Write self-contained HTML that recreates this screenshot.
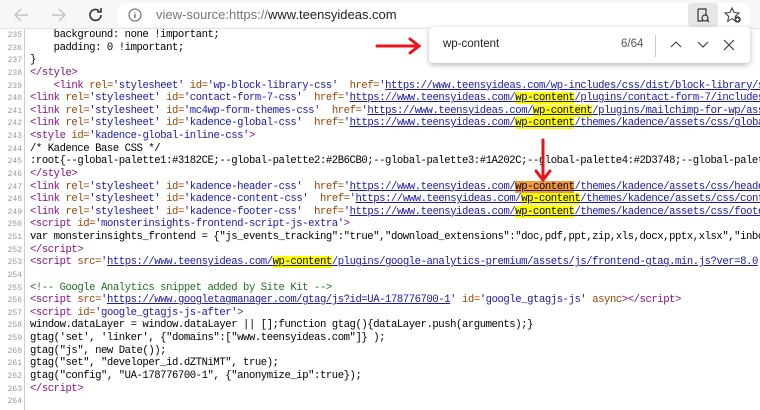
<!DOCTYPE html>
<html><head><meta charset="utf-8"><style>
*{margin:0;padding:0;box-sizing:border-box}
body{width:760px;height:410px;overflow:hidden;background:#fff;position:relative;font-family:"Liberation Sans",sans-serif}
.tb{position:absolute;left:0;top:0;width:760px;height:29px;background:#f7f7f7;border-bottom:1px solid #e4e4e4}
.addr{position:absolute;left:118px;top:3px;width:632px;height:24px;background:#fff;border-radius:5px}
.url{position:absolute;left:156px;top:7px;font-size:13px;color:#777}
.url b{font-weight:normal;color:#222}
.gut{position:absolute;left:0;top:29px;width:25px;height:381px;background:#fff;border-right:1px solid #ccc}
.code{position:absolute;left:0;top:29px;width:760px}
.l{height:12.63px;line-height:12.63px;white-space:pre;font-family:"Liberation Mono",monospace;font-size:10.6px;letter-spacing:-0.44px;color:#000;position:relative;overflow:hidden}
.n{display:inline-block;width:22px;text-align:right;color:#999;font-size:8px;letter-spacing:0;margin-right:8px}
.t{color:#881280}.a{color:#994500}.v{color:#1a1aa6}.c{color:#236e25}
.u{color:#1a1aa6;text-decoration:underline}
.h{background:#ffff00;color:#000}.o{background:#f39a3a;color:#000}
.find{position:absolute;left:429px;top:27px;width:321px;height:36px;background:#fff;border-radius:4px;box-shadow:0 2px 6px rgba(0,0,0,.28)}
</style></head><body>
<div class="tb">
<svg style="position:absolute;left:12px;top:7px" width="18" height="16"><path d="M16 8H3M9 2L3 8l6 6" stroke="#c4c4c4" stroke-width="1.5" fill="none"/></svg>
<svg style="position:absolute;left:50px;top:7px" width="18" height="16"><path d="M2 8h13M9 2l6 6-6 6" stroke="#c4c4c4" stroke-width="1.5" fill="none"/></svg>
<svg style="position:absolute;left:87px;top:6px" width="18" height="18"><path d="M14 9a5.5 5.5 0 1 1-2-4.3" stroke="#333" stroke-width="1.6" fill="none"/><path d="M14 2v4h-4" stroke="#333" stroke-width="1.6" fill="none"/></svg>
<div class="addr"></div>
<svg style="position:absolute;left:128px;top:8px" width="14" height="14"><circle cx="7" cy="7" r="6" stroke="#555" fill="none"/><path d="M7 6v4M7 4v.8" stroke="#555" stroke-width="1.2"/></svg>
<div class="url">view-source:https://<b>www.teensyideas.com</b></div>
<div style="position:absolute;left:688px;top:3px;width:30px;height:24px;background:#e6e6e6;border-radius:3px"></div>
<svg style="position:absolute;left:695px;top:6px" width="16" height="18"><path d="M3 3h8v7M3 3v12h5" stroke="#333" fill="none" stroke-width="1.2"/><circle cx="10" cy="12" r="3" stroke="#333" fill="none" stroke-width="1.2"/><path d="M12 14l2 2" stroke="#333" stroke-width="1.3"/></svg>
<svg style="position:absolute;left:724px;top:6px" width="18" height="18"><path d="M8 2l2 4.5 5 .5-3.7 3.3 1 4.9L8 12.7 3.7 15.2l1-4.9L1 7l5-.5z" stroke="#444" fill="none" stroke-width="1.1"/><circle cx="13.5" cy="13.5" r="3.3" fill="#444"/><path d="M13.5 11.8v3.4M11.8 13.5h3.4" stroke="#fff" stroke-width="1"/></svg>
</div>
<div class="gut"></div>
<div class="code">
<div class="l"><span class="n">235</span>    background: none !important;</div>
<div class="l"><span class="n">236</span>    padding: 0 !important;</div>
<div class="l"><span class="n">237</span>}</div>
<div class="l"><span class="n">238</span><span class="t">&lt;/style&gt;</span></div>
<div class="l"><span class="n">239</span>    <span class="t">&lt;link </span><span class="a">rel=</span><span class="v">'stylesheet'</span> <span class="a">id=</span><span class="v">'wp-block-library-css'</span>  <span class="a">href=</span><span class="v">'</span><span class="u">https://www.teensyideas.com/wp-includes/css/dist/block-library/style.min.css</span></div>
<div class="l"><span class="n">240</span><span class="t">&lt;link </span><span class="a">rel=</span><span class="v">'stylesheet'</span> <span class="a">id=</span><span class="v">'contact-form-7-css'</span>  <span class="a">href=</span><span class="v">'</span><span class="u">https://www.teensyideas.com/<span class="h">wp-content</span>/plugins/contact-form-7/includes/css</span></div>
<div class="l"><span class="n">241</span><span class="t">&lt;link </span><span class="a">rel=</span><span class="v">'stylesheet'</span> <span class="a">id=</span><span class="v">'mc4wp-form-themes-css'</span>  <span class="a">href=</span><span class="v">'</span><span class="u">https://www.teensyideas.com/<span class="h">wp-content</span>/plugins/mailchimp-for-wp/assets</span></div>
<div class="l"><span class="n">242</span><span class="t">&lt;link </span><span class="a">rel=</span><span class="v">'stylesheet'</span> <span class="a">id=</span><span class="v">'kadence-global-css'</span>  <span class="a">href=</span><span class="v">'</span><span class="u">https://www.teensyideas.com/<span class="h">wp-content</span>/themes/kadence/assets/css/global.min</span></div>
<div class="l"><span class="n">243</span><span class="t">&lt;style </span><span class="a">id=</span><span class="v">'kadence-global-inline-css'</span><span class="t">&gt;</span></div>
<div class="l"><span class="n">244</span>/* Kadence Base CSS */</div>
<div class="l"><span class="n">245</span>:root{--global-palette1:#3182CE;--global-palette2:#2B6CB0;--global-palette3:#1A202C;--global-palette4:#2D3748;--global-palette5</div>
<div class="l"><span class="n">246</span><span class="t">&lt;/style&gt;</span></div>
<div class="l"><span class="n">247</span><span class="t">&lt;link </span><span class="a">rel=</span><span class="v">'stylesheet'</span> <span class="a">id=</span><span class="v">'kadence-header-css'</span>  <span class="a">href=</span><span class="v">'</span><span class="u">https://www.teensyideas.com/<span class="o">wp-content</span>/themes/kadence/assets/css/header.min</span></div>
<div class="l"><span class="n">248</span><span class="t">&lt;link </span><span class="a">rel=</span><span class="v">'stylesheet'</span> <span class="a">id=</span><span class="v">'kadence-content-css'</span>  <span class="a">href=</span><span class="v">'</span><span class="u">https://www.teensyideas.com/<span class="h">wp-content</span>/themes/kadence/assets/css/content.m</span></div>
<div class="l"><span class="n">249</span><span class="t">&lt;link </span><span class="a">rel=</span><span class="v">'stylesheet'</span> <span class="a">id=</span><span class="v">'kadence-footer-css'</span>  <span class="a">href=</span><span class="v">'</span><span class="u">https://www.teensyideas.com/<span class="h">wp-content</span>/themes/kadence/assets/css/footer.min</span></div>
<div class="l"><span class="n">250</span><span class="t">&lt;script </span><span class="a">id=</span><span class="v">'monsterinsights-frontend-script-js-extra'</span><span class="t">&gt;</span></div>
<div class="l"><span class="n">251</span>var monsterinsights_frontend = {"js_events_tracking":"true","download_extensions":"doc,pdf,ppt,zip,xls,docx,pptx,xlsx","inbound</div>
<div class="l"><span class="n">252</span><span class="t">&lt;/script&gt;</span></div>
<div class="l"><span class="n">253</span><span class="t">&lt;script </span><span class="a">src=</span><span class="v">'</span><span class="u">https://www.teensyideas.com/<span class="h">wp-content</span>/plugins/google-analytics-premium/assets/js/frontend-gtag.min.js?ver=8.0</span></div>
<div class="l"><span class="n">254</span></div>
<div class="l"><span class="n">255</span><span class="c">&lt;!-- Google Analytics snippet added by Site Kit --&gt;</span></div>
<div class="l"><span class="n">256</span><span class="t">&lt;script </span><span class="a">src=</span><span class="v">'</span><span class="u">https://www.googletagmanager.com/gtag/js?id=UA-178776700-1</span><span class="v">'</span> <span class="a">id=</span><span class="v">'google_gtagjs-js'</span> <span class="a">async</span><span class="t">&gt;&lt;/script&gt;</span></div>
<div class="l"><span class="n">257</span><span class="t">&lt;script </span><span class="a">id=</span><span class="v">'google_gtagjs-js-after'</span><span class="t">&gt;</span></div>
<div class="l"><span class="n">258</span>window.dataLayer = window.dataLayer || [];function gtag(){dataLayer.push(arguments);}</div>
<div class="l"><span class="n">259</span>gtag('set', 'linker', {"domains":["www.teensyideas.com"]} );</div>
<div class="l"><span class="n">260</span>gtag("js", new Date());</div>
<div class="l"><span class="n">261</span>gtag("set", "developer_id.dZTNiMT", true);</div>
<div class="l"><span class="n">262</span>gtag("config", "UA-178776700-1", {"anonymize_ip":true});</div>
<div class="l"><span class="n">263</span><span class="t">&lt;/script&gt;</span></div>
<div class="l"><span class="n">264</span></div>
</div>
<div class="find">
<div style="position:absolute;left:14px;top:11px;font-size:11.5px;color:#222">wp-content</div>
<div style="position:absolute;left:192px;top:11px;font-size:11.5px;color:#555">6/64</div>
<div style="position:absolute;left:226px;top:8px;width:1px;height:22px;background:#ccc"></div>
<svg style="position:absolute;left:240px;top:12px" width="14" height="10"><path d="M2 8l5-5 5 5" stroke="#444" fill="none" stroke-width="1.2"/></svg>
<svg style="position:absolute;left:267px;top:13px" width="14" height="10"><path d="M2 2l5 5 5-5" stroke="#444" fill="none" stroke-width="1.2"/></svg>
<svg style="position:absolute;left:293px;top:11px" width="14" height="14"><path d="M2 2l10 10M12 2L2 12" stroke="#444" stroke-width="1.2"/></svg>
</div>
<svg style="position:absolute;left:375px;top:36px" width="50" height="20"><path d="M2 10h42M35 3l9 7-9 7" stroke="#e8141b" stroke-width="3" fill="none" stroke-linecap="round"/></svg>
<svg style="position:absolute;left:532px;top:138px" width="22" height="46"><path d="M11 2v40M4 33l7 9 7-9" stroke="#e8141b" stroke-width="3" fill="none" stroke-linecap="round"/></svg>
</body></html>
